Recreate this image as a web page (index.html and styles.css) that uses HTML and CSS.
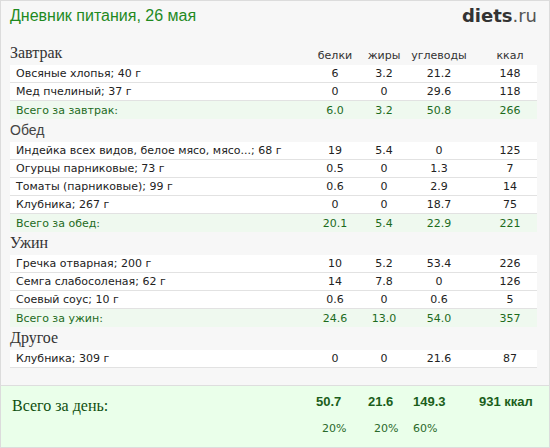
FILE: index.html
```html
<!DOCTYPE html>
<html lang="ru">
<head>
<meta charset="utf-8">
<title>Дневник питания</title>
<link rel="stylesheet" href="styles.css">
</head>
<body>
<div class="page">
  <header class="top">
    <h1 class="title">Дневник питания, 26 мая</h1>
    <div class="logo"><b>diets</b>.ru</div>
  </header>

  <section class="meal">
    <div class="meal-head">
      <h2 class="meal-title serif">Завтрак</h2>
      <span class="colname">белки</span><span class="colname">жиры</span><span class="colname">углеводы</span><span class="colname last">ккал</span>
    </div>
    <div class="row"><span class="name">Овсяные хлопья; 40 г</span><span>6</span><span>3.2</span><span>21.2</span><span class="last">148</span></div>
    <div class="row"><span class="name">Мед пчелиный; 37 г</span><span>0</span><span>0</span><span>29.6</span><span class="last">118</span></div>
    <div class="row total"><span class="name">Всего за завтрак:</span><span>6.0</span><span>3.2</span><span>50.8</span><span class="last">266</span></div>
  </section>

  <section class="meal">
    <div class="meal-head"><h2 class="meal-title sans">Обед</h2></div>
    <div class="row"><span class="name">Индейка всех видов, белое мясо, мясо...; 68 г</span><span>19</span><span>5.4</span><span>0</span><span class="last">125</span></div>
    <div class="row"><span class="name">Огурцы парниковые; 73 г</span><span>0.5</span><span>0</span><span>1.3</span><span class="last">7</span></div>
    <div class="row"><span class="name">Томаты (парниковые); 99 г</span><span>0.6</span><span>0</span><span>2.9</span><span class="last">14</span></div>
    <div class="row"><span class="name">Клубника; 267 г</span><span>0</span><span>0</span><span>18.7</span><span class="last">75</span></div>
    <div class="row total"><span class="name">Всего за обед:</span><span>20.1</span><span>5.4</span><span>22.9</span><span class="last">221</span></div>
  </section>

  <section class="meal">
    <div class="meal-head"><h2 class="meal-title serif">Ужин</h2></div>
    <div class="row"><span class="name">Гречка отварная; 200 г</span><span>10</span><span>5.2</span><span>53.4</span><span class="last">226</span></div>
    <div class="row"><span class="name">Семга слабосоленая; 62 г</span><span>14</span><span>7.8</span><span>0</span><span class="last">126</span></div>
    <div class="row"><span class="name">Соевый соус; 10 г</span><span>0.6</span><span>0</span><span>0.6</span><span class="last">5</span></div>
    <div class="row total"><span class="name">Всего за ужин:</span><span>24.6</span><span>13.0</span><span>54.0</span><span class="last">357</span></div>
  </section>

  <section class="meal">
    <div class="meal-head"><h2 class="meal-title serif">Другое</h2></div>
    <div class="row"><span class="name">Клубника; 309 г</span><span>0</span><span>0</span><span>21.6</span><span class="last">87</span></div>
  </section>

  <footer class="day">
    <div class="day-label">Всего за день:</div>
    <div class="day-val">50.7</div>
    <div class="day-val">21.6</div>
    <div class="day-val">149.3</div>
    <div class="day-val">931 ккал</div>
    <div class="day-pct day-pct-1">20%</div>
    <div class="day-pct">20%</div>
    <div class="day-pct day-pct-3">60%</div>
  </footer>
</div>
</body>
</html>
```

FILE: styles.css
```css
* { box-sizing: border-box; }
html, body { margin: 0; padding: 0; }
body {
  width: 550px;
  height: 448px;
  overflow: hidden;
  font-family: "DejaVu Sans", Verdana, sans-serif;
  font-size: 11px;
  color: #222;
}
.page {
  width: 550px;
  height: 448px;
  border: 1px solid #dcdcdc;
  background: #f7f7f7;
  display: flex;
  flex-direction: column;
}
.top {
  height: 41px;
  flex: none;
  display: flex;
  justify-content: space-between;
  align-items: flex-start;
  padding: 0 12px 0 9px;
}
.title {
  margin: 6px 0 0 0;
  font-family: "Liberation Sans", Arial, sans-serif;
  font-weight: normal;
  font-size: 16px;
  color: #1f8a1f;
}
.logo {
  margin-top: 4px;
  font-family: "DejaVu Sans", Verdana, sans-serif;
  font-size: 18px;
  color: #555;
}
.logo b { color: #333; }
.meal { padding: 0 12px 0 9px; flex: none; }
.meal-head, .row {
  display: grid;
  grid-template-columns: 1fr 50px 48px 62px 67px;
  align-items: center;
}
.meal-head { height: 23px; align-items: end; padding-bottom: 3px; }
.meal-title {
  margin: 0;
  font-weight: normal;
  color: #333;
  line-height: 18px;
}
.meal-title.serif { font-family: "Liberation Serif", Georgia, serif; font-size: 16px; }
.meal-title.sans { font-family: "Liberation Sans", Arial, sans-serif; font-size: 14px; color: #444; }
.colname { text-align: center; color: #333; line-height: 13px; }
.row {
  height: 18px;
  background: #fff;
  border-bottom: 1px solid #e2e2e2;
}
.row span { text-align: center; }
.row .name { text-align: left; padding-left: 6px; white-space: nowrap; overflow: hidden; }
.last { padding-left: 13px; }
.row.total {
  background: #eff9ef;
  color: #1d6b1d;
  border-bottom: none;
}
.day {
  margin-top: auto;
  height: 62px;
  flex: none;
  border-top: 1px solid #dedede;
  background: #eaffea;
  padding: 7px 12px 0 9px;
  display: grid;
  grid-template-columns: 1fr 52px 45px 66px 58px;
  grid-template-rows: 18px 18px;
  row-gap: 9px;
  align-items: start;
}
.day-label {
  font-family: "Liberation Serif", Georgia, serif;
  font-size: 16px;
  line-height: 18px;
  padding-top: 4px;
  color: #0f4f0f;
  padding-left: 2px;
}
.day-val {
  font-family: "Liberation Sans", Arial, sans-serif;
  font-weight: bold;
  font-size: 13px;
  line-height: 18px;
  color: #1b5e1b;
}
.day-pct {
  font-size: 11px;
  line-height: 18px;
  color: #2a6a2a;
  padding-left: 6px;
}
.day-pct-1 { grid-column: 2; }
.day-pct-3 { padding-left: 0; }
```
